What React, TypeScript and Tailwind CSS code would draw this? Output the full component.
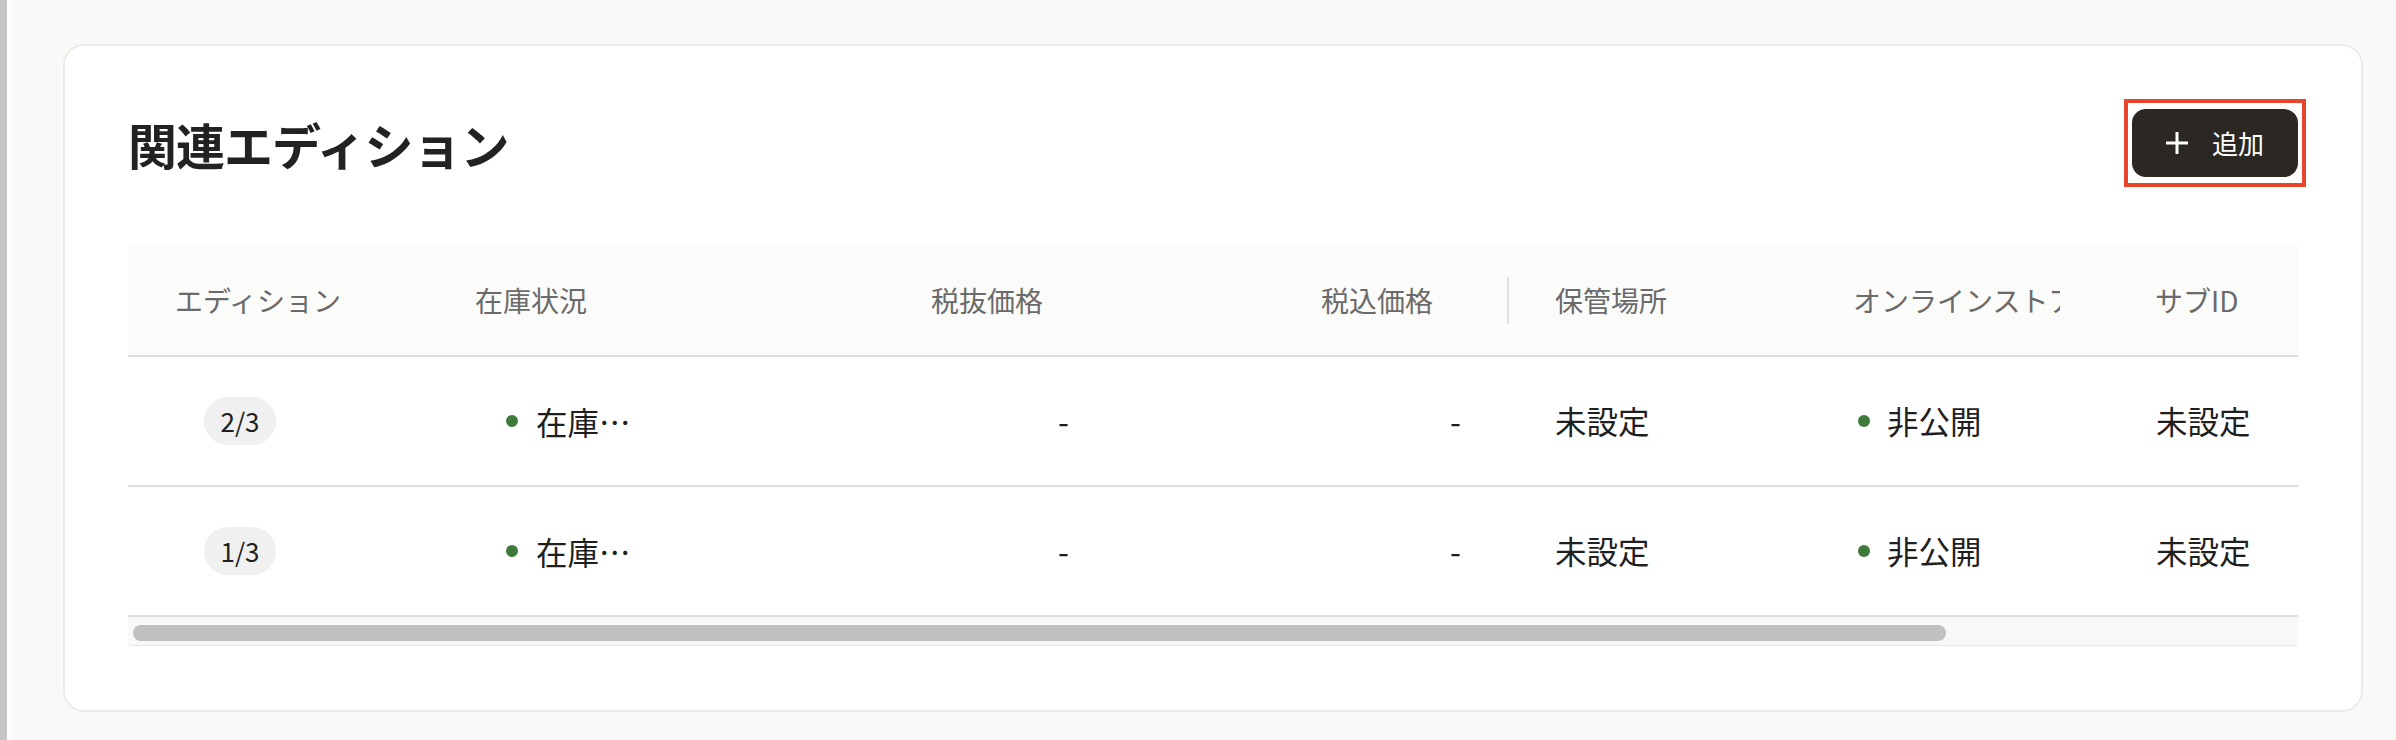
import type { ReactNode } from "react";

type Row = {
  edition: string;
  stock: string;
  priceEx: string;
  priceIn: string;
  place: string;
  online: string;
  subId: string;
};

const rows: Row[] = [
  { edition: "2/3", stock: "在庫あり", priceEx: "-", priceIn: "-", place: "未設定", online: "非公開", subId: "未設定" },
  { edition: "1/3", stock: "在庫あり", priceEx: "-", priceIn: "-", place: "未設定", online: "非公開", subId: "未設定" },
];

function Dot() {
  return <span className="size-[12px] shrink-0 rounded-full bg-[#3e7b3a]" />;
}

function PlusIcon() {
  return (
    <svg width="22" height="22" viewBox="0 0 22 22" fill="none" className="shrink-0">
      <path d="M11 0v22M0 11h22" stroke="currentColor" strokeWidth="3" />
    </svg>
  );
}

function Cell({ className, children }: { className: string; children: ReactNode }) {
  return <div className={`flex h-full shrink-0 items-center ${className}`}>{children}</div>;
}

export default function App() {
  return (
    <div className="flex h-[740px] w-full bg-[#f9f9f7] font-['Noto_Sans_CJK_JP',sans-serif]">
      <div className="w-[7px] shrink-0 bg-[#c4c4c4]" />
      <div className="w-[5px] shrink-0 bg-[#fdfdfc]" />

      <main className="min-w-0 flex-1 pl-[51px] pr-[33px] pt-[44px]">
        <section className="rounded-[21px] border-2 border-[#ebebe7] bg-white px-[63px] pb-[64px] pt-[63px]">
          {/* title + add button */}
          <div className="flex h-[68px] items-center justify-between">
            <h2 className="text-[49px] font-bold leading-none tracking-[-1px] text-[#222]">関連エディション</h2>
            <span className="-my-[10px] -mr-[8px] inline-flex border-4 border-[#e8452c] px-[4px] py-[6px]">
              <button className="flex h-[68px] w-[166px] items-center justify-center gap-[24px] rounded-[14px] bg-[#2b2823] text-white">
                <PlusIcon />
                <span className="text-[26px] leading-none">追加</span>
              </button>
            </span>
          </div>

          {/* table */}
          <div className="mt-[68px] overflow-hidden">
            <div className="w-max">
              <div className="flex h-[112px] items-center border-b-2 border-[#dedede] bg-[#fbfbf9] text-[28px] leading-none text-[#6a6a6a]">
                <Cell className="w-[300px] pl-[47px]">エディション</Cell>
                <Cell className="w-[400px] pl-[47px]">在庫状況</Cell>
                <Cell className="w-[288px] justify-end pr-[73px]">税抜価格</Cell>
                <Cell className="w-[393px] justify-end">
                  <span>税込価格</span>
                  <span className="ml-[74px] h-[47px] w-[2px] bg-[#e0e0e0]" />
                </Cell>
                <Cell className="w-[299px] pl-[46px]">保管場所</Cell>
                <Cell className="w-[300px] pl-[45px] pr-[48px]">
                  <span className="block overflow-hidden whitespace-nowrap">オンラインストア公開</span>
                </Cell>
                <Cell className="w-[492px] pl-[47px]">サブID</Cell>
              </div>

              {rows.map((r) => (
                <div
                  key={r.edition}
                  className="flex h-[130px] items-center border-b-2 border-[#dedede] text-[31.5px] leading-none text-[#1f1f1f]"
                >
                  <Cell className="w-[300px] pl-[76px]">
                    <span className="flex h-[48px] w-[72px] items-center justify-center rounded-full bg-[#f0f0f0] text-[26px]">
                      {r.edition}
                    </span>
                  </Cell>
                  <Cell className="w-[400px] gap-[18px] pl-[78px]">
                    <Dot />
                    <span className="w-[100px] truncate leading-[1.3]">{r.stock}</span>
                  </Cell>
                  <Cell className="w-[288px] justify-end pr-[47px]">{r.priceEx}</Cell>
                  <Cell className="w-[393px] justify-end pr-[48px]">{r.priceIn}</Cell>
                  <Cell className="w-[299px] pl-[46px]">{r.place}</Cell>
                  <Cell className="w-[300px] gap-[17px] pl-[50px]">
                    <Dot />
                    <span>{r.online}</span>
                  </Cell>
                  <Cell className="w-[492px] pl-[48px]">{r.subId}</Cell>
                </div>
              ))}
            </div>
          </div>

          {/* horizontal scrollbar */}
          <div className="h-[29px] rounded-b-[4px] border-b border-[#e6e6e6] bg-[#f8f8f8] pl-[5px] pt-[8px]">
            <div className="h-[16px] w-[1813px] rounded-full bg-[#c0c0c0]" />
          </div>
        </section>
      </main>
    </div>
  );
}
